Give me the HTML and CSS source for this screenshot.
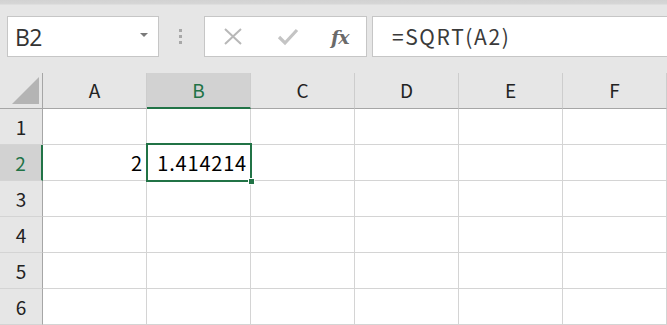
FILE: index.html
```html
<!DOCTYPE html>
<html lang="ja">
<head>
    <meta charset="UTF-8">
    <title>Book1 - Excel</title>
    <link rel="stylesheet" href="styles.css">
</head>
<body>
    <div class="topband"></div>
    <!-- 数式バー -->
    <div class="toolbar">
        <div class="namebox">
            <span class="name">B2</span>
            <span class="caret"></span>
        </div>
        <div class="grip"><i></i><i></i><i></i></div>
        <div class="fxbox">
            <svg class="btn" width="20" height="20" viewBox="0 0 20 20">
                <path d="M2 2 L18 17 M18 2 L2 17" stroke="#b8b8b8" stroke-width="2" fill="none"/>
            </svg>
            <svg class="btn" width="22" height="20" viewBox="0 0 22 20">
                <path d="M2 10 L8 16 L20 3" stroke="#c4c4c4" stroke-width="3.2" fill="none"/>
            </svg>
            <span class="fx">fx</span>
        </div>
        <div class="formula">=SQRT(A2)</div>
    </div>
    <!-- シート -->
    <div class="sheet">
        <div class="corner">
            <svg width="43" height="36" viewBox="0 0 43 36">
                <polygon points="12,31 39,31 39,4" fill="#b4b4b4"/>
            </svg>
        </div>
        <div class="colhead">A</div>
        <div class="colhead sel">B</div>
        <div class="colhead">C</div>
        <div class="colhead">D</div>
        <div class="colhead">E</div>
        <div class="colhead">F</div>

        <div class="rowhead">1</div>
        <div class="cell"></div><div class="cell"></div><div class="cell"></div><div class="cell"></div><div class="cell"></div><div class="cell"></div>

        <div class="rowhead sel">2</div>
        <div class="cell num">2</div>
        <div class="cell num active">1.414214<span class="cursor"></span><span class="handle"></span></div>
        <div class="cell"></div><div class="cell"></div><div class="cell"></div><div class="cell"></div>

        <div class="rowhead">3</div>
        <div class="cell"></div><div class="cell"></div><div class="cell"></div><div class="cell"></div><div class="cell"></div><div class="cell"></div>

        <div class="rowhead">4</div>
        <div class="cell"></div><div class="cell"></div><div class="cell"></div><div class="cell"></div><div class="cell"></div><div class="cell"></div>

        <div class="rowhead">5</div>
        <div class="cell"></div><div class="cell"></div><div class="cell"></div><div class="cell"></div><div class="cell"></div><div class="cell"></div>

        <div class="rowhead">6</div>
        <div class="cell"></div><div class="cell"></div><div class="cell"></div><div class="cell"></div><div class="cell"></div><div class="cell"></div>
    </div>
</body>
</html>
```

FILE: styles.css
```css
*{
    margin: 0;
    padding: 0;
    box-sizing: border-box;
}
body{
    width: 667px;
    height: 325px;
    overflow: hidden;
    background: #e6e6e6;
    font-family: "Noto Sans CJK JP", "Noto Sans", sans-serif;
    color: #000;
}
.topband{
    height: 5px;
    background: linear-gradient(#d2d2d2, #d6d6d6 70%, #e2e2e2);
}
.toolbar{
    display: flex;
    height: 52px;
    padding: 11px 0 0 7px;
}
.namebox{
    width: 152px;
    height: 41px;
    background: #fff;
    border: 1px solid #c6c6c6;
    display: flex;
    align-items: center;
    justify-content: space-between;
    padding: 0 10px 0 7px;
}
.name{
    font-family: "Open Sans", "Liberation Sans", sans-serif;
    font-size: 23px;
    color: #333;
    letter-spacing: -0.5px;
}
.caret{
    width: 0;
    height: 0;
    border-left: 4px solid transparent;
    border-right: 4px solid transparent;
    border-top: 4px solid #7a7a7a;
    margin-bottom: 3px;
}
.grip{
    margin-left: 20px;
    width: 3px;
    display: flex;
    flex-direction: column;
    gap: 3px;
    padding-top: 13px;
}
.grip i{
    display: block;
    width: 3px;
    height: 3px;
    background: #a8a8a8;
}
.fxbox{
    margin-left: 22px;
    width: 163px;
    height: 41px;
    background: #fff;
    border: 1px solid #c6c6c6;
    display: flex;
    align-items: center;
    padding-left: 18px;
    gap: 34px;
}
.btn{
    display: block;
}
.fx{
    font-family: "DejaVu Serif", "Liberation Serif", serif;
    font-style: italic;
    font-weight: bold;
    font-size: 19px;
    color: #6a6a6a;
    margin-left: -2px;
    letter-spacing: -1px;
}
.formula{
    margin-left: 5px;
    flex: 1;
    height: 41px;
    margin-right: -2px;
    background: #fff;
    border: 1px solid #c6c6c6;
    font-size: 21px;
    color: #3a3a3a;
    padding-left: 19px;
    line-height: 38px;
    letter-spacing: 1.6px;
}
.sheet{
    margin-top: 16px;
    display: grid;
    grid-template-columns: 43px repeat(6, 104px);
    grid-template-rows: 36px repeat(6, 36px);
    background: #fff;
}
.corner{
    background: #e6e6e6;
    border-right: 1px solid #a6a6a6;
    border-bottom: 1px solid #a6a6a6;
}
.corner svg{
    display: block;
}
.colhead{
    background: #e6e6e6;
    border-right: 1px solid #cdcdcd;
    border-bottom: 1px solid #a6a6a6;
    text-align: center;
    font-size: 19px;
    line-height: 34px;
    color: #222;
}
.colhead.sel{
    background: #d2d2d2;
    color: #217346;
    border-bottom: 2px solid #217346;
}
.rowhead{
    background: #e6e6e6;
    border-right: 1px solid #a6a6a6;
    border-bottom: 1px solid #d4d4d4;
    text-align: center;
    font-size: 19px;
    line-height: 35px;
    color: #222;
}
.rowhead.sel{
    background: #d2d2d2;
    color: #217346;
    border-right: 2px solid #217346;
}
.cell{
    border-right: 1px solid #d4d4d4;
    border-bottom: 1px solid #d4d4d4;
    font-size: 20px;
    line-height: 35px;
    padding: 0 3px;
    letter-spacing: 0.8px;
}
.num{
    text-align: right;
}
.active{
    position: relative;
}
.cursor{
    position: absolute;
    left: -1px;
    top: -2px;
    width: 106px;
    height: 39px;
    border: 2px solid #217346;
}
.handle{
    position: absolute;
    left: 101px;
    top: 33px;
    width: 7px;
    height: 7px;
    background: #217346;
    border: 1px solid #fff;
}
```
